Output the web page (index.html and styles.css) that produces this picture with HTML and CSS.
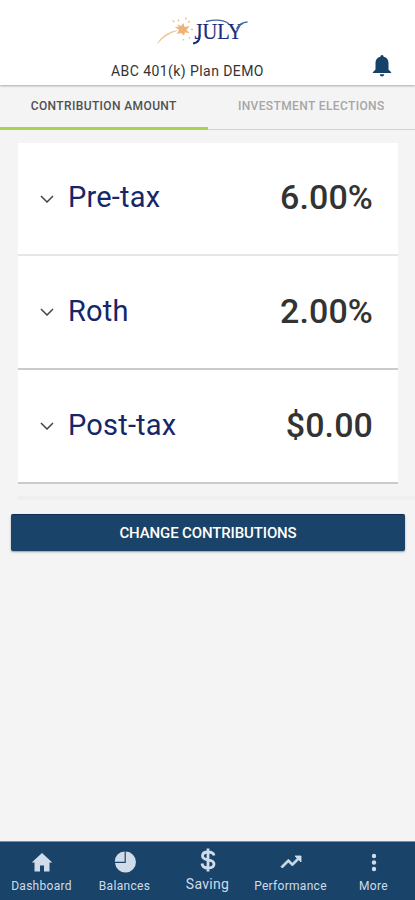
FILE: index.html
```html
<!DOCTYPE html>
<html lang="en">
<head>
<meta charset="utf-8">
<title>Contributions</title>
<link rel="stylesheet" href="styles.css">
</head>
<body>
<div class="app">
  <header class="header">
    <svg class="logo" viewBox="156 12 94 36" role="img" aria-label="July">
      <path d="M157.500 43.500Q164 32.500 177 30.500Q165 34.500 157.500 43.500Z" fill="#edbd88" stroke="#edbd88" stroke-width=".5"/>
      <path d="M177 24l4 2 2.500-3 1 4 5-1-3 4 3 3-4.500-.5-1 3-3-2.500-4 1 2-4-4-3 4-.5z" fill="#f0b377"/>
      <path d="M178 19.500l1 2M186 17.500l-.5 2M190 21l-2 1.500M191 29.500h2M189 37l1 1.500M183.500 39v1.500M174.500 22l-2-1.500" stroke="#f2bd8a" stroke-width="1.300" fill="none"/>
      <text class="logo-text" x="194.500" y="39" font-size="24" textLength="48" lengthAdjust="spacingAndGlyphs">JULY</text>
      <path d="M199.700 35Q200 42.500 193 43.500" fill="none" stroke="#1b2c7c" stroke-width="2"/>
      <path d="M206 21.500Q222 18 229 24M236.500 29Q240 22.500 247.500 22" fill="none" stroke="#4263a0" stroke-width="1.300"/>
    </svg>
    <h1 class="plan">ABC 401(k) Plan DEMO</h1>
    <svg class="bell" viewBox="0 0 20 22"><path d="M10 0c1 0 1.600.7 1.600 1.800C15 2.500 16.500 5 16.500 8v6.500l2.700 2.700V18H.8v-.8l2.700-2.700V8c0-3 1.500-5.500 4.900-6.200C8.400.7 9 0 10 0zM7.800 19.300h4.400c0 1.300-.9 2.200-2.200 2.200s-2.200-.9-2.200-2.200z"/></svg>
  </header>
  <nav class="tabs">
    <a class="tab tab-active"><span>CONTRIBUTION AMOUNT</span></a>
    <a class="tab"><span>INVESTMENT ELECTIONS</span></a>
  </nav>
  <main class="content">
    <section class="list">
      <div class="row row-light"><svg class="chevron" viewBox="0 0 14 8"><path d="M1 1l6 6 6-6"/></svg><span class="name">Pre-tax</span><span class="value">6.00%</span></div>
      <div class="row"><svg class="chevron" viewBox="0 0 14 8"><path d="M1 1l6 6 6-6"/></svg><span class="name">Roth</span><span class="value">2.00%</span></div>
      <div class="row"><svg class="chevron" viewBox="0 0 14 8"><path d="M1 1l6 6 6-6"/></svg><span class="name">Post-tax</span><span class="value">$0.00</span></div>
    </section>
    <div class="divider"></div>
    <button class="change">CHANGE CONTRIBUTIONS</button>
  </main>
  <nav class="bottom">
    <a class="item"><svg viewBox="0 0 24 24"><path d="M10 21.500v-6h4v6h5.500v-9h2.800L12 3 1.700 12.500h2.800v9z"/></svg><span>Dashboard</span></a>
    <a class="item"><svg viewBox="0 0 24 24"><path d="M12.800 1.500A10.500 10.500 0 1 1 2 13h10.800zM11.600 1.500V11.800H1.800A10 10 0 0 1 11.600 1.500z"/></svg><span>Balances</span></a>
    <a class="item item-active"><svg viewBox="0 0 24 24"><path class="stroke" d="M18 7.500C17.500 5 15.500 4 12 4C8.500 4 6.500 5.600 6.500 8C6.500 14 18 9.500 18 16C18 18.500 15.500 20 12 20C8.500 20 6.300 18.500 6 15.500M12 .5v23"/></svg><span>Saving</span></a>
    <a class="item"><svg viewBox="0 0 24 24"><path d="M16 6l2.300 2.300-4.900 4.900-4-4L2 16.600 3.400 18l6-6 4 4 6.300-6.300L22 12V6z" stroke="#d0dce9" stroke-width=".9"/></svg><span>Performance</span></a>
    <a class="item"><svg viewBox="0 0 24 24"><circle cx="12" cy="6" r="2.200"/><circle cx="12" cy="12.500" r="2.200"/><circle cx="12" cy="19" r="2.200"/></svg><span>More</span></a>
  </nav>
</div>
</body>
</html>
```
FILE: styles.css
```css
* { box-sizing: border-box; }
body { margin: 0; background: #f4f4f4; font-family: Roboto, sans-serif; }
.app { height: 900px; display: flex; flex-direction: column; overflow: hidden; }
.header { height: 85px; flex: none; background: #fff; display: grid; grid-template-columns: 72px 1fr 72px; grid-template-rows: 48px 37px; position: relative; z-index: 1; box-shadow: 0 1px 2px #aaa; }
.logo { grid-column: 2; width: 94px; height: 36px; margin: 12px 0 0 84px; }
.logo-text { font-family: "Liberation Serif", serif; fill: #1b2c7c; stroke: #1b2c7c; stroke-width: .2; }
.plan { grid-column: 2; grid-row: 2; margin: 14px 0 0 39px; font-size: 14px; line-height: 18px; font-weight: 400; color: #333; white-space: nowrap; letter-spacing: .43px; }
.bell { grid-column: 3; grid-row: 2; width: 20px; height: 22px; margin: 7px 0 0 29px; fill: #164169; }
.tabs { height: 45px; flex: none; display: flex; }
.tab { flex: 1; display: flex; justify-content: center; padding-top: 14px; border-bottom: 1px solid #d2d2d2; font-size: 12px; line-height: 14px; font-weight: 500; color: #a6a6a6; letter-spacing: .38px; white-space: nowrap; }
.tab-active { color: #505050; border-bottom: 3px solid #a8d14e; }
.content { flex: 1; padding-top: 13px; }
.list { margin: 0 17px 0 18px; }
.row { height: 114px; display: flex; align-items: center; padding: 0 25px 3px 22px; background: #fff; border-bottom: 2px solid #cacaca; }
.row-light { height: 113px; border-color: #e6e6e6; }
.chevron { width: 14px; height: 8px; margin-top: 3px; fill: none; stroke: #444; stroke-width: 1.500; }
.name { margin-left: 14px; color: #152768; font-size: 29px; letter-spacing: .2px; }
.value { margin-left: auto; color: #333; font-size: 34px; font-weight: 500; letter-spacing: .1px; }
.divider { height: 4px; margin: 12px 0 0 17px; background: #efefef; }
.change { display: block; width: 394px; height: 37px; margin: 14px 0 0 11px; border: 0; border-top: 1px solid #102d58; border-radius: 2px; background: #194368; box-shadow: 0 1px 2px #999; color: #fff; font: 500 15px Roboto, sans-serif; letter-spacing: -.13px; padding: 0; }
.bottom { height: 59px; flex: none; display: flex; border-top: 1px solid #788d9e; background: #194368; color: #d0dce9; }
.item { width: 20%; display: flex; flex-direction: column; align-items: center; padding-top: 8px; font-size: 12px; line-height: 16px; letter-spacing: .3px; }
.item svg { width: 24px; height: 24px; margin-bottom: 4px; fill: currentColor; }
.item .stroke { fill: none; stroke: currentColor; stroke-width: 2.800; }
.item-active { padding-top: 6px; font-size: 14px; }
```
